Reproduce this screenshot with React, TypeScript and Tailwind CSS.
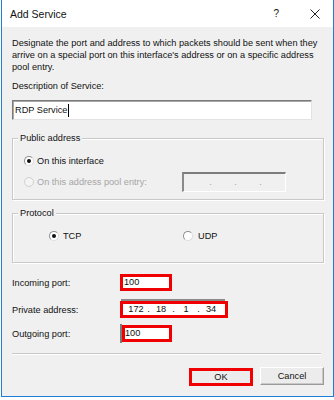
import React from "react";

function Radio({ checked, disabled }: { checked?: boolean; disabled?: boolean }) {
  return (
    <span
      className={
        "relative inline-flex items-center justify-center w-[10px] h-[10px] rounded-full border shrink-0 " +
        (disabled
          ? "border-[#d0d0d0] bg-[#f4f4f4]"
          : "border-[#8e8e8e] border-b-[#dcdcdc] border-r-[#dcdcdc] bg-white")
      }
    >
      {checked && <span className="w-[4px] h-[4px] rounded-full bg-[#111]" />}
    </span>
  );
}

function Octets({ values, color }: { values: string[]; color: string }) {
  return (
    <div className={"flex items-center leading-[11px] " + color}>
      {values.map((v, i) => (
        <React.Fragment key={i}>
          {i > 0 && <span className="w-[5px] text-center">.</span>}
          <span className="w-[20px] text-center">{v}</span>
        </React.Fragment>
      ))}
    </div>
  );
}

export default function App() {
  return (
    <div className="w-[334px] h-[400px] bg-white font-['Liberation_Sans',Arial,sans-serif] text-[#111] overflow-hidden">
      <div className="ml-[1px] w-[333px] h-[397px] border-l border-r border-b border-[#1c7ed6] bg-[#f0f0f0] flex flex-col">
        {/* Title bar */}
        <div className="h-[27px] bg-white flex items-center pl-[8px] pr-[13px] shrink-0">
          <span className="text-[10.5px] leading-[12px]">Add Service</span>
          <span className="ml-auto text-[10px] leading-[10px] mr-[31px]">?</span>
          <svg width="10" height="10" viewBox="0 0 10 10" className="block">
            <path d="M0.5 0.5 L9.5 9.5 M9.5 0.5 L0.5 9.5" stroke="#222" strokeWidth="1" fill="none" />
          </svg>
        </div>

        {/* Body */}
        <div className="flex flex-col pl-[10px] pr-[9px] text-[9.2px] leading-[12px]">
          <p className="mt-[10px] leading-[12px]">
            Designate the port and address to which packets should be sent when they arrive on a special port on
            this interface's address or on a specific address pool entry.
          </p>
          <div className="mt-[7px]">Description of Service:</div>
          <div className="mt-[8px] w-[300px] h-[20px] bg-white border border-[#7a7a7a] border-r-[#e3e3e3] border-b-[#e3e3e3] shadow-[inset_1px_1px_0_#a8a8a8] flex items-center pl-[2px]">
            <span className="leading-[12px]">RDP Service</span>
            <span className="w-[1px] h-[13px] bg-black ml-[1px]" />
          </div>

          {/* Public address */}
          <div className="mt-[18px] h-[62px] border border-[#c9c9c9] shadow-[inset_1px_1px_0_#ffffff,1px_1px_0_#ffffff] flex flex-col">
            <span className="block w-fit -mt-[7px] ml-[5px] px-[2px] bg-[#f0f0f0] leading-[12px]">Public address</span>
            <div className="mt-[11px] ml-[11px] flex items-center gap-[3px] h-[12px]">
              <Radio checked />
              <span>On this interface</span>
            </div>
            <div className="mt-[5px] ml-[11px] flex items-center h-[20px]">
              <div className="w-[158px] flex items-center gap-[3px] text-[#a6a6a6]">
                <Radio disabled />
                <span>On this address pool entry:</span>
              </div>
              <div className="w-[104px] h-[20px] border-t-2 border-l-2 border-t-[#7d7d7d] border-l-[#8a8a8a] border-r border-b border-r-white border-b-white bg-[#f0f0f0] flex items-center pl-[4px]">
                <Octets values={["", "", "", ""]} color="text-[#a0a0a0]" />
              </div>
            </div>
          </div>

          {/* Protocol */}
          <div className="mt-[13px] h-[50px] border border-[#c9c9c9] shadow-[inset_1px_1px_0_#ffffff,1px_1px_0_#ffffff] flex flex-col">
            <span className="block w-fit -mt-[7px] ml-[5px] px-[2px] bg-[#f0f0f0] leading-[12px]">Protocol</span>
            <div className="mt-[11px] ml-[36px] flex items-center h-[12px]">
              <div className="w-[134px] flex items-center gap-[4px]">
                <Radio checked />
                <span>TCP</span>
              </div>
              <div className="flex items-center gap-[5px]">
                <Radio />
                <span>UDP</span>
              </div>
            </div>
          </div>

          {/* Ports */}
          <div className="mt-[11px] flex items-center h-[17px]">
            <span className="w-[108px]">Incoming port:</span>
            <div className="w-[52px] h-[17px] border-[3px] border-[#f00000] bg-white flex items-center pl-[1px]">
              <span className="leading-[11px]">100</span>
            </div>
          </div>
          <div className="mt-[10px] flex items-center h-[17px]">
            <span className="w-[108px]">Private address:</span>
            <div className="relative w-[108px] h-[17px] border-[3px] border-[#f00000] bg-white flex items-center pl-[3px]">
              <span className="absolute -top-[5px] -left-[2px] w-[104px] h-[2px] bg-[#8a8a8a]" />
              <Octets values={["172", "18", "1", "34"]} color="text-[#111]" />
            </div>
          </div>
          <div className="mt-[7px] flex items-center h-[17px]">
            <span className="w-[108px]">Outgoing port:</span>
            <span className="w-[2px] h-[19px] bg-[#7a7a7a]" />
            <div className="w-[50px] h-[17px] border-[3px] border-[#f00000] bg-white flex items-center">
              <span className="leading-[11px]">100</span>
            </div>
          </div>

          {/* Separator */}
          <div className="mt-[11px] w-[309px] h-[2px] border-t border-t-[#c8c8c8] border-b border-b-white" />

          {/* Buttons */}
          <div className="mt-[12px] flex items-start justify-end gap-[7px]">
            <div className="mt-[1px] w-[64px] h-[18px] border-[3px] border-[#f00000] bg-[#ececec] flex items-center justify-center">
              OK
            </div>
            <div className="w-[64px] h-[18px] border border-t-white border-l-white border-r-[#9a9a9a] border-b-[#9a9a9a] shadow-[inset_-1px_-1px_0_#c9c9c9] bg-[#ececec] flex items-center justify-center">
              Cancel
            </div>
          </div>
        </div>
      </div>
    </div>
  );
}
